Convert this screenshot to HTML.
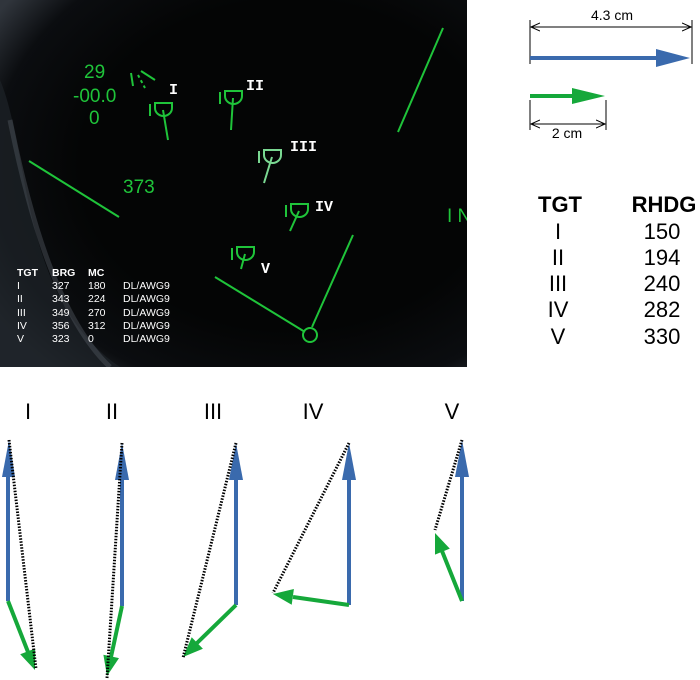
<!DOCTYPE html>
<html><head><style>
body{margin:0;width:700px;height:680px;background:#fff;overflow:hidden;font-family:"Liberation Sans",sans-serif}
</style></head><body>
<svg width="700" height="680" viewBox="0 0 700 680" xmlns="http://www.w3.org/2000/svg" style="position:absolute;left:0;top:0">
<defs>
<radialGradient id="vg" cx="0.62" cy="0.45" r="0.75">
<stop offset="0.6" stop-color="#040505"/><stop offset="0.85" stop-color="#0b0d10"/><stop offset="1" stop-color="#30353c"/>
</radialGradient>
<clipPath id="cp"><rect x="0" y="0" width="467" height="367"/></clipPath>
<marker id="ah" markerWidth="10" markerHeight="10" refX="9" refY="5" orient="auto" markerUnits="userSpaceOnUse"><path d="M0,1 L9,5 L0,9" fill="none" stroke="#000" stroke-width="1"/></marker>
</defs>
<g clip-path="url(#cp)">
<rect x="0" y="0" width="467" height="367" fill="url(#vg)"/>
<path d="M0,80 C30,150 20,300 120,367 L0,367z" fill="#1c2025" opacity="0.8"/>
<path d="M10,120 C30,220 60,320 110,367" stroke="#4a5058" stroke-width="5" fill="none" opacity="0.5"/>
<g stroke="#1fc43a" stroke-width="2" fill="none">
<line x1="443" y1="28" x2="398" y2="132"/>
<line x1="29" y1="161" x2="119" y2="217"/>
<line x1="215" y1="277" x2="305" y2="332"/>
<line x1="353" y1="235" x2="312" y2="327"/>
<circle cx="310" cy="335" r="7"/>
<line x1="131" y1="73" x2="133" y2="86"/><line x1="138" y1="75" x2="145" y2="88" stroke-dasharray="3 3"/>
<line x1="141" y1="71" x2="155" y2="80"/>
<g transform="translate(150,112)"><line x1="0" y1="-8" x2="0" y2="4"/><path d="M5,-9 H22 V-4 A8.5,8 0 0 1 5,-4 Z"/><line x1="13" y1="-2" x2="18" y2="28"/></g>
<g transform="translate(220,100)"><line x1="0" y1="-8" x2="0" y2="4"/><path d="M5,-9 H22 V-4 A8.5,8 0 0 1 5,-4 Z"/><line x1="13" y1="-2" x2="11" y2="30"/></g>
<g transform="translate(259,159)" stroke="#7ad892"><line x1="0" y1="-8" x2="0" y2="4"/><path d="M5,-9 H22 V-4 A8.5,8 0 0 1 5,-4 Z"/><line x1="13" y1="-2" x2="5" y2="24"/></g>
<g transform="translate(286,213)"><line x1="0" y1="-8" x2="0" y2="4"/><path d="M5,-9 H22 V-4 A8.5,8 0 0 1 5,-4 Z"/><line x1="13" y1="-2" x2="4" y2="18"/></g>
<g transform="translate(232,256)"><line x1="0" y1="-8" x2="0" y2="4"/><path d="M5,-9 H22 V-4 A8.5,8 0 0 1 5,-4 Z"/><line x1="13" y1="-2" x2="9" y2="13"/></g>
</g>
<g fill="#1fc43a" font-family="Liberation Sans,sans-serif" font-size="19">
<text x="84" y="78">29</text><text x="73" y="102">-00.0</text><text x="89" y="124">0</text>
<text x="123" y="193">373</text><text x="447" y="222">I N</text>
</g>
<g fill="#fff" font-family="Liberation Mono,monospace" font-weight="bold" font-size="15">
<text x="169" y="94">I</text><text x="246" y="90">II</text><text x="290" y="151">III</text><text x="315" y="211">IV</text><text x="261" y="273">V</text>
</g>
<g fill="#fff" font-size="10.5">
<g font-weight="bold"><text x="17" y="276">TGT</text><text x="52" y="276">BRG</text><text x="88" y="276">MC</text></g>
<text x="17" y="289">I</text><text x="52" y="289">327</text><text x="88" y="289">180</text><text x="123" y="289">DL/AWG9</text>
<text x="17" y="302">II</text><text x="52" y="302">343</text><text x="88" y="302">224</text><text x="123" y="302">DL/AWG9</text>
<text x="17" y="316">III</text><text x="52" y="316">349</text><text x="88" y="316">270</text><text x="123" y="316">DL/AWG9</text>
<text x="17" y="329">IV</text><text x="52" y="329">356</text><text x="88" y="329">312</text><text x="123" y="329">DL/AWG9</text>
<text x="17" y="342">V</text><text x="52" y="342">323</text><text x="88" y="342">0</text><text x="123" y="342">DL/AWG9</text>
</g>
</g>

<!-- right legend -->
<g stroke="#000" stroke-width="1">
<line x1="530" y1="20" x2="530" y2="64"/><line x1="692" y1="20" x2="692" y2="64"/>
<line x1="531" y1="27" x2="691" y2="27" marker-end="url(#ah)"/><line x1="691" y1="27" x2="531" y2="27" marker-end="url(#ah)"/>
<line x1="530" y1="100" x2="530" y2="130"/><line x1="606" y1="100" x2="606" y2="130"/>
<line x1="531" y1="124" x2="605" y2="124" marker-end="url(#ah)"/><line x1="605" y1="124" x2="531" y2="124" marker-end="url(#ah)"/>
</g>
<text x="612" y="20" font-size="14" text-anchor="middle">4.3 cm</text>
<text x="567" y="138" font-size="14" text-anchor="middle">2 cm</text>
<line x1="530" y1="58" x2="660" y2="58" stroke="#3a6aad" stroke-width="4"/>
<path d="M690,58 L656,49 L656,67z" fill="#3a6aad"/>
<line x1="530" y1="96" x2="576" y2="96" stroke="#15a83a" stroke-width="4"/>
<path d="M605,96 L572,88 L572,104z" fill="#15a83a"/>
<g font-size="22" text-anchor="middle">
<text x="560" y="212" font-weight="bold">TGT</text><text x="664" y="212" font-weight="bold">RHDG</text>
<text x="558" y="239">I</text><text x="662" y="239">150</text>
<text x="558" y="265">II</text><text x="662" y="265">194</text>
<text x="558" y="291">III</text><text x="662" y="291">240</text>
<text x="558" y="317">IV</text><text x="662" y="317">282</text>
<text x="558" y="344">V</text><text x="662" y="344">330</text>
</g>

<!-- bottom vectors -->
<g font-size="22" text-anchor="middle">
<text x="28" y="419">I</text><text x="112" y="419">II</text><text x="213" y="419">III</text><text x="313" y="419">IV</text><text x="452" y="419">V</text>
</g>
<g stroke-width="4" fill="none">
<line x1="8" y1="601" x2="8" y2="470" stroke="#3a6aad"/>
<line x1="122" y1="606" x2="122" y2="473" stroke="#3a6aad"/>
<line x1="236" y1="605" x2="236" y2="473" stroke="#3a6aad"/>
<line x1="349" y1="605" x2="349" y2="473" stroke="#3a6aad"/>
<line x1="462" y1="601" x2="462" y2="470" stroke="#3a6aad"/>
<line x1="8" y1="601" x2="28" y2="652" stroke="#15a83a"/>
<line x1="122" y1="606" x2="111" y2="657" stroke="#15a83a"/>
<line x1="236" y1="605" x2="197" y2="643" stroke="#15a83a"/>
<line x1="349" y1="605" x2="293" y2="597" stroke="#15a83a"/>
<line x1="462" y1="601" x2="442" y2="551" stroke="#15a83a"/>
</g>
<g fill="#3a6aad">
<path d="M9,440 L2,477 L15,477z"/>
<path d="M122,443 L115,480 L129,480z"/>
<path d="M236,443 L229,480 L243,480z"/>
<path d="M349,443 L342,480 L356,480z"/>
<path d="M462,440 L455,477 L469,477z"/>
</g>
<g fill="#15a83a">
<path d="M35,670 L20.2,654.3 L35.2,648.5z"/>
<path d="M107,676 L103.4,654.7 L119,658.1z"/>
<path d="M183,657 L191.7,637.3 L202.9,648.7z"/>
<path d="M273,594 L293.9,589 L291.7,604.8z"/>
<path d="M435,533 L449.8,548.6 L435,554.6z"/>
</g>
<g stroke="#000" stroke-width="3" stroke-dasharray="1.5 1.5" fill="none">
<line x1="9" y1="440" x2="36" y2="669"/>
<line x1="122" y1="443" x2="107" y2="678"/>
<line x1="236" y1="443" x2="183" y2="658"/>
<line x1="349" y1="443" x2="273" y2="593"/>
<line x1="462" y1="440" x2="435" y2="530"/>
</g>
</svg>
</body></html>
